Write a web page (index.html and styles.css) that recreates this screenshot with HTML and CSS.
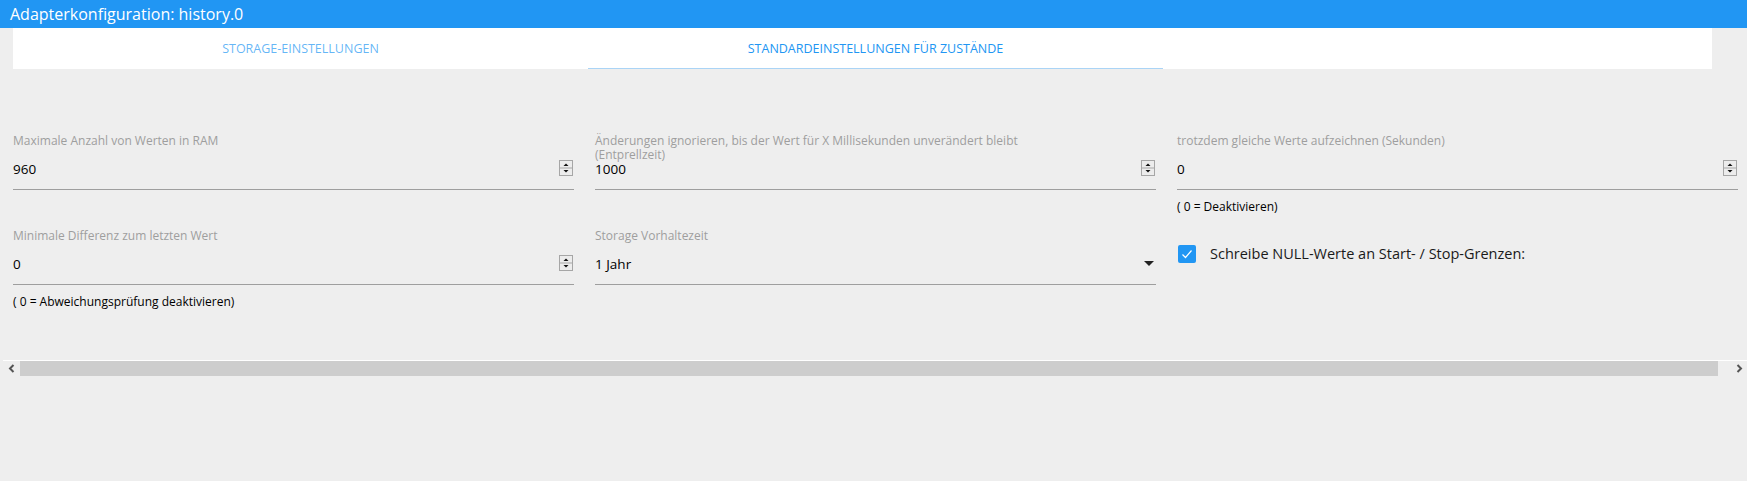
FILE: index.html
```html
<!DOCTYPE html>
<html>
<head>
	<title>Adapterkonfiguration: history.0</title>
	<meta charset="utf-8">
	<link rel="stylesheet" href="styles.css">
</head>
<body>
	<div class="titlebar">Adapterkonfiguration: history.0</div>
	<div class="tabs">
		<div class="tab">STORAGE-EINSTELLUNGEN</div>
		<div class="tab active">STANDARDEINSTELLUNGEN FÜR ZUSTÄNDE</div>
	</div>

	<div class="content">
		<div class="grid">
			<div class="field">
				<div class="label">Maximale Anzahl von Werten in RAM</div>
				<div class="input">
					<span class="value">960</span>
					<svg class="spin" width="14" height="16" viewBox="0 0 14 16"><rect x="0.5" y="0.5" width="13" height="15" fill="#ececec" stroke="#a6a6a6"/><line x1="1" y1="8" x2="13" y2="8" stroke="#a6a6a6"/><path d="M4.5 6 L7 3.5 L9.5 6 Z" fill="#111"/><path d="M4.5 10 L9.5 10 L7 12.5 Z" fill="#111"/></svg>
				</div>
			</div>
			<div class="field">
				<div class="label">Änderungen ignorieren, bis der Wert für X Millisekunden unverändert bleibt<br>(Entprellzeit)</div>
				<div class="input">
					<span class="value">1000</span>
					<svg class="spin" width="14" height="16" viewBox="0 0 14 16"><rect x="0.5" y="0.5" width="13" height="15" fill="#ececec" stroke="#a6a6a6"/><line x1="1" y1="8" x2="13" y2="8" stroke="#a6a6a6"/><path d="M4.5 6 L7 3.5 L9.5 6 Z" fill="#111"/><path d="M4.5 10 L9.5 10 L7 12.5 Z" fill="#111"/></svg>
				</div>
			</div>
			<div class="field">
				<div class="label">trotzdem gleiche Werte aufzeichnen (Sekunden)</div>
				<div class="input">
					<span class="value">0</span>
					<svg class="spin" width="14" height="16" viewBox="0 0 14 16"><rect x="0.5" y="0.5" width="13" height="15" fill="#ececec" stroke="#a6a6a6"/><line x1="1" y1="8" x2="13" y2="8" stroke="#a6a6a6"/><path d="M4.5 6 L7 3.5 L9.5 6 Z" fill="#111"/><path d="M4.5 10 L9.5 10 L7 12.5 Z" fill="#111"/></svg>
				</div>
				<div class="helper">( 0 = Deaktivieren)</div>
			</div>

			<div class="field">
				<div class="label">Minimale Differenz zum letzten Wert</div>
				<div class="input">
					<span class="value">0</span>
					<svg class="spin" width="14" height="16" viewBox="0 0 14 16"><rect x="0.5" y="0.5" width="13" height="15" fill="#ececec" stroke="#a6a6a6"/><line x1="1" y1="8" x2="13" y2="8" stroke="#a6a6a6"/><path d="M4.5 6 L7 3.5 L9.5 6 Z" fill="#111"/><path d="M4.5 10 L9.5 10 L7 12.5 Z" fill="#111"/></svg>
				</div>
				<div class="helper">( 0 = Abweichungsprüfung deaktivieren)</div>
			</div>
			<div class="field">
				<div class="label">Storage Vorhaltezeit</div>
				<div class="input select">
					<span class="value">1 Jahr</span>
					<svg class="caret" width="10" height="6" viewBox="0 0 10 6"><path d="M0 0 L10 0 L5 5 Z" fill="#222"/></svg>
				</div>
			</div>
			<div class="field">
				<div class="check">
					<svg class="box" width="18" height="18" viewBox="0 0 18 18"><rect x="0" y="0" width="18" height="18" rx="2" fill="#2196f3"/><path d="M4.5 9.5 L7.5 12.5 L13.5 5.5" fill="none" stroke="#fff" stroke-width="1.2"/></svg>
					<span>Schreibe NULL-Werte an Start- / Stop-Grenzen:</span>
				</div>
			</div>
		</div>
	</div>

	<div class="hscroll">
		<div class="arrow">
			<svg width="8" height="9" viewBox="0 0 8 9"><path d="M5.5 1 L2 4.5 L5.5 8" fill="none" stroke="#555" stroke-width="2"/></svg>
		</div>
		<div class="thumb"></div>
		<div class="track"></div>
		<div class="arrow">
			<svg width="8" height="9" viewBox="0 0 8 9"><path d="M2.5 1 L6 4.5 L2.5 8" fill="none" stroke="#555" stroke-width="2"/></svg>
		</div>
	</div>
</body>
</html>
```

FILE: styles.css
```css
body {
	margin: 0;
	background: #eeeeee;
	font-family: "Open Sans", "Noto Sans", sans-serif;
	color: #000;
}
.titlebar {
	height: 28px;
	line-height: 28px;
	background: #2196f3;
	color: #fff;
	font-size: 16px;
	padding-left: 10px;
}
.tabs {
	display: flex;
	height: 41px;
	margin: 0 35px 0 13px;
	background: #fff;
}
.tab {
	width: 575px;
	text-align: center;
	font-size: 12.5px;
	line-height: 41px;
	color: rgba(33, 150, 243, 0.7);
}
.tab.active {
	color: #2196f3;
	box-shadow: inset 0 -1px 0 #aad4f6;
}
.content {
	height: 226px;
	padding-top: 65px;
}
.grid {
	display: grid;
	grid-template-columns: repeat(3, 561px);
	grid-auto-rows: 95px;
	column-gap: 21px;
	padding-left: 13px;
}
.label {
	height: 22px;
	font-size: 12px;
	line-height: 14px;
	color: #9e9e9e;
	white-space: nowrap;
}
.input {
	display: flex;
	justify-content: space-between;
	align-items: flex-start;
	height: 29px;
	padding-top: 4px;
	border-bottom: 1px solid #9e9e9e;
}
.value {
	font-size: 13.5px;
	line-height: 18px;
}
.spin {
	margin-right: 1px;
}
.caret {
	margin: 6px 2px 0 0;
}
.helper {
	margin-top: 9px;
	font-size: 12px;
	line-height: 16px;
}
.check {
	display: flex;
	align-items: center;
	gap: 14px;
	margin-top: 15px;
	margin-left: 1px;
	font-size: 14.5px;
	color: #1a1a1a;
}
.hscroll {
	display: flex;
	height: 15px;
	margin-left: 3px;
	border-top: 1px solid #fff;
}
.arrow {
	width: 17px;
	display: flex;
	align-items: center;
	justify-content: center;
}
.thumb {
	width: 1698px;
	background: #cdcdcd;
}
.track {
	flex: 1;
}
```
